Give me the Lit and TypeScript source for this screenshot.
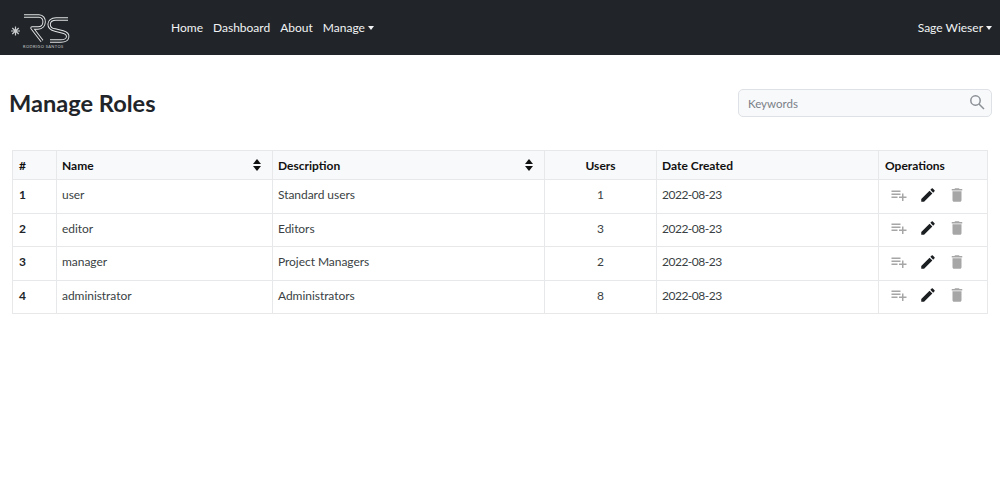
import { LitElement, css, html, svg } from "lit";
import { customElement } from "lit/decorators.js";

const ROLES = [
  { id: 1, name: "user", description: "Standard users", users: 1, created: "2022-08-23" },
  { id: 2, name: "editor", description: "Editors", users: 3, created: "2022-08-23" },
  { id: 3, name: "manager", description: "Project Managers", users: 2, created: "2022-08-23" },
  { id: 4, name: "administrator", description: "Administrators", users: 8, created: "2022-08-23" },
];

const ADD_ICON = svg`<path d="M14 10H2v2h12v-2zm0-4H2v2h12V6zm4 8v-4h-2v4h-4v2h4v4h2v-4h4v-2h-4zM2 16h8v-2H2v2z" />`;
const EDIT_ICON = svg`<path d="M3 17.25V21h3.75L17.81 9.94l-3.75-3.75L3 17.25zM20.71 7.04c.39-.39.39-1.02 0-1.41l-2.34-2.34c-.39-.39-1.02-.39-1.41 0l-1.83 1.83 3.75 3.75 1.83-1.83z" />`;
const DELETE_ICON = svg`<path d="M6 19c0 1.1.9 2 2 2h8c1.1 0 2-.9 2-2V7H6v12zM19 4h-3.5l-1-1h-5l-1 1H5v2h14V4z" />`;

const LOGO_R = "M24 13H39C46 13 46 25 38 25H32L42 38";
const LOGO_S = "M68 16H56C47 16 47 26 55 27L63 29C70 31 69 38 61 38H50";

@customElement("app-root")
export class AppRoot extends LitElement {
  static styles = css`
    :host {
      display: block;
      font-family: Lato, "Open Sans", sans-serif;
      font-size: 13px;
      color: #212529;
      background: #fff;
    }

    .navbar {
      display: flex;
      align-items: center;
      height: 55px;
      box-sizing: border-box;
      background: #212529;
      color: #f1f3f5;
      padding: 0 8px 0 10px;
    }

    .brand {
      display: flex;
      width: 161px;
      height: 50px;
      position: relative;
    }

    .brand svg {
      display: block;
    }

    .brand-name {
      position: absolute;
      left: 13px;
      top: 41px;
      font-size: 4px;
      letter-spacing: 0.4px;
      color: #c9cbcd;
      white-space: nowrap;
    }

    .nav {
      display: flex;
      gap: 10px;
      font-size: 12px;
    }

    .spacer {
      flex: 1;
    }

    .toggle::after {
      content: "";
      display: inline-block;
      margin-left: 3px;
      vertical-align: 2px;
      border-top: 4px solid currentColor;
      border-left: 3.5px solid transparent;
      border-right: 3.5px solid transparent;
    }

    .user {
      font-size: 12px;
    }

    .head {
      display: flex;
      align-items: center;
      justify-content: space-between;
      height: 95px;
      padding: 0 8px 0 9px;
    }

    h1 {
      margin: 0;
      font-size: 23.6px;
      font-weight: 700;
      line-height: 1.2;
      position: relative;
      top: 1px;
    }

    .search {
      display: flex;
      align-items: center;
      justify-content: space-between;
      box-sizing: border-box;
      width: 254px;
      height: 28px;
      padding: 2px 6px 0 9px;
      background: #f8f9fa;
      border: 1px solid #dee2e6;
      border-radius: 5px;
      color: #7a8087;
      font-size: 11.5px;
    }

    .search svg {
      display: block;
      margin-top: -3px;
    }

    .table-wrap {
      padding: 0 12px;
    }

    table {
      width: 975px;
      table-layout: fixed;
      border-collapse: collapse;
    }

    .c-id { width: 44px; }
    .c-name { width: 216px; }
    .c-desc { width: 272px; }
    .c-users { width: 112px; }
    .c-date { width: 222px; }
    .c-ops { width: 109px; }

    th,
    td {
      border: 1px solid #e6e8ea;
      padding: 0 5px;
      text-align: left;
      white-space: nowrap;
    }

    th:first-child,
    td:first-child,
    th:last-child,
    td:last-child {
      padding-left: 6px;
    }

    th {
      height: 28px;
      background: #f8f9fa;
      color: #111;
      font-weight: 700;
      font-size: 12px;
    }

    td {
      height: 29.5px;
      padding-bottom: 3px;
      font-size: 12px;
      letter-spacing: -0.05px;
      color: #3a3f44;
    }

    td.num {
      font-weight: 700;
      color: #212529;
    }

    td.date {
      letter-spacing: -0.5px;
    }

    .center {
      text-align: center;
    }

    .sortable {
      display: flex;
      align-items: center;
      justify-content: space-between;
      padding-right: 6px;
    }

    .sort {
      display: flex;
      flex-direction: column;
      gap: 2px;
    }

    .sort i {
      display: block;
      border-left: 4px solid transparent;
      border-right: 4px solid transparent;
    }

    .sort i:first-child {
      border-bottom: 5px solid #111;
    }

    .sort i:last-child {
      border-top: 5px solid #111;
    }

    .ops {
      display: flex;
      gap: 11px;
      padding-left: 5px;
    }

    .ops svg {
      display: block;
      width: 18px;
      height: 18px;
      fill: #a6a6a6;
    }

    .ops svg.edit {
      fill: #1c1f22;
    }
  `;

  private sortHead(label: string) {
    return html`<div class="sortable">
      ${label}
      <span class="sort"><i></i><i></i></span>
    </div>`;
  }

  render() {
    return html`
      <nav class="navbar">
        <div class="brand">
          <svg width="70" height="50" viewBox="0 0 70 50" fill="none" stroke-linejoin="round">
            <g transform="translate(-10 0)">
              <path d="${LOGO_R}" stroke="#e4e5e6" stroke-width="3.4" />
              <path d="${LOGO_R}" stroke="#212529" stroke-width="1.5" />
              <path d="${LOGO_S}" stroke="#e4e5e6" stroke-width="3.4" />
              <path d="${LOGO_S}" stroke="#212529" stroke-width="1.5" />
              <g stroke="#c9cbcd" stroke-width="1.2">
                <path d="M11 28h9M15.500 23.500v9M12.300 25l6.400 6M18.700 25l-6.400 6" />
              </g>
            </g>
          </svg>
          <span class="brand-name">RODRIGO SANTOS</span>
        </div>
        <div class="nav">
          <span>Home</span>
          <span>Dashboard</span>
          <span>About</span>
          <span class="toggle">Manage</span>
        </div>
        <div class="spacer"></div>
        <span class="user toggle">Sage Wieser</span>
      </nav>
      <div class="head">
        <h1>Manage Roles</h1>
        <div class="search">
          <span>Keywords</span>
          <svg width="16" height="16" viewBox="0 0 16 16" fill="none" stroke="#8b9096" stroke-width="1.5">
            <circle cx="6.500" cy="6.500" r="4.700" />
            <path d="M10 10l5 5" />
          </svg>
        </div>
      </div>
      <div class="table-wrap">
        <table>
          <colgroup>
            <col class="c-id" />
            <col class="c-name" />
            <col class="c-desc" />
            <col class="c-users" />
            <col class="c-date" />
            <col class="c-ops" />
          </colgroup>
          <thead>
            <tr>
              <th>#</th>
              <th>${this.sortHead("Name")}</th>
              <th>${this.sortHead("Description")}</th>
              <th class="center">Users</th>
              <th>Date Created</th>
              <th>Operations</th>
            </tr>
          </thead>
          <tbody>
            ${ROLES.map(
              (r) => html`<tr>
                <td class="num">${r.id}</td>
                <td>${r.name}</td>
                <td>${r.description}</td>
                <td class="center">${r.users}</td>
                <td class="date">${r.created}</td>
                <td>
                  <div class="ops">
                    <svg viewBox="0 0 24 24">${ADD_ICON}</svg>
                    <svg class="edit" viewBox="0 0 24 24">${EDIT_ICON}</svg>
                    <svg viewBox="0 0 24 24">${DELETE_ICON}</svg>
                  </div>
                </td>
              </tr>`,
            )}
          </tbody>
        </table>
      </div>
    `;
  }
}
